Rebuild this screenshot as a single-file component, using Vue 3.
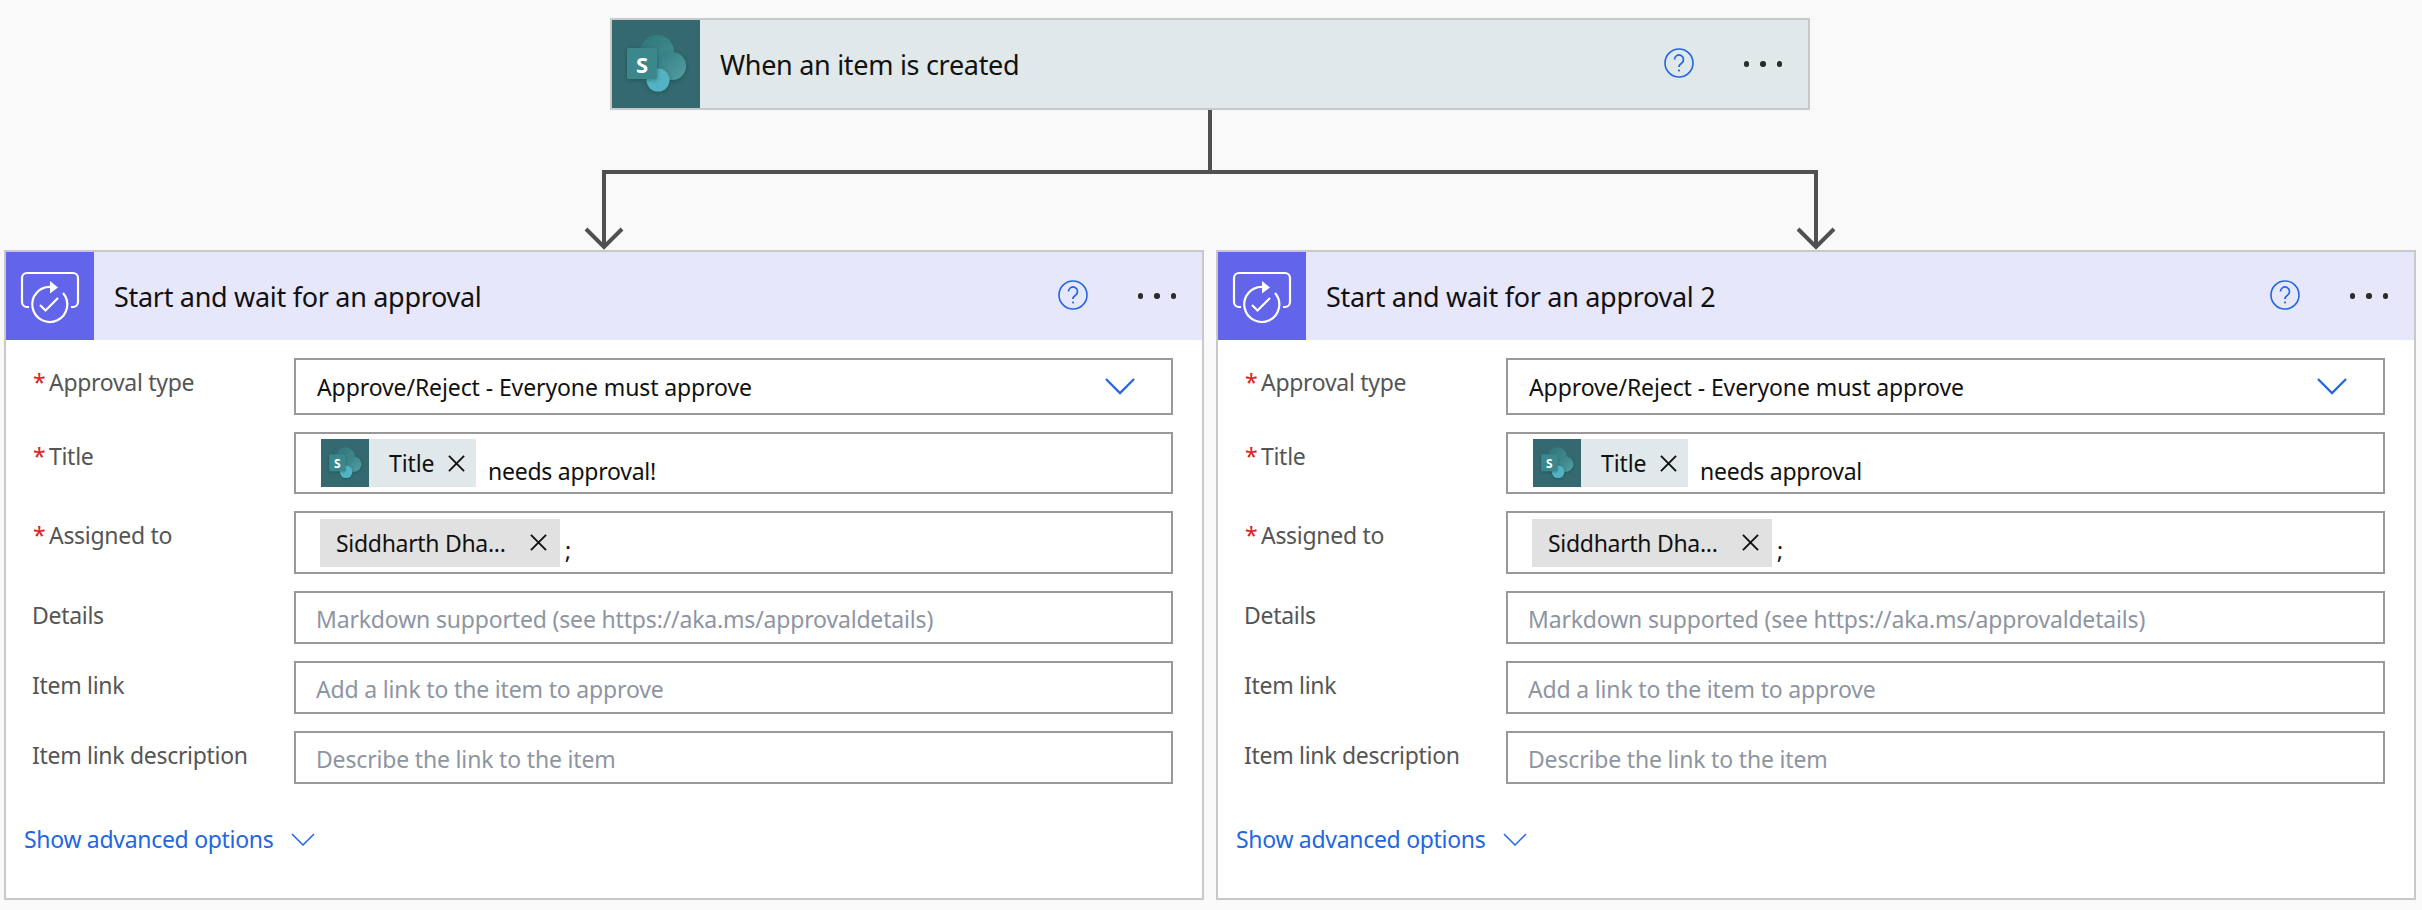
<script setup>
const requiredRows = ['Approval type', 'Title', 'Assigned to']
const placeholderRows = [
  { label: 'Details', text: 'Markdown supported (see https://aka.ms/approvaldetails)' },
  { label: 'Item link', text: 'Add a link to the item to approve' },
  { label: 'Item link description', text: 'Describe the link to the item' },
]
const cards = [
  { title: 'Start and wait for an approval', tail: 'needs approval!' },
  { title: 'Start and wait for an approval 2', tail: 'needs approval' },
]
</script>

<template>
  <div class="page">
    <svg class="defs" width="0" height="0" aria-hidden="true">
      <defs>
        <linearGradient id="spA" x1="0" y1="0" x2="1" y2="1">
          <stop offset="0" stop-color="#2c7478" />
          <stop offset="1" stop-color="#479397" />
        </linearGradient>
        <linearGradient id="spB" x1="0" y1="0" x2="1" y2="1">
          <stop offset="0" stop-color="#327c80" />
          <stop offset="1" stop-color="#54a0a5" />
        </linearGradient>
        <filter id="spShadow" x="-30%" y="-30%" width="160%" height="160%">
          <feDropShadow dx="0" dy="1" stdDeviation="2" flood-color="#0d3a3e" flood-opacity="0.45" />
        </filter>
        <symbol id="sp" viewBox="0 0 88 88">
          <rect width="88" height="88" fill="#33696f" />
          <circle cx="45" cy="32" r="17" fill="url(#spA)" />
          <circle cx="60" cy="46" r="14" fill="url(#spB)" filter="url(#spShadow)" />
          <circle cx="46" cy="60" r="11.500" fill="#52b2c3" filter="url(#spShadow)" />
          <rect x="15" y="28" width="30" height="31" rx="1.500" fill="#3a878b" filter="url(#spShadow)" />
          <text x="30" y="52.500" text-anchor="middle" font-family="Open Sans, sans-serif" font-weight="700" font-size="22" fill="#fff">S</text>
        </symbol>
        <symbol id="approval" viewBox="0 0 88 88">
          <rect width="88" height="88" fill="#6264ea" />
          <g fill="none" stroke="#fff" stroke-width="2.200">
            <path d="M23 55h-2a5 5 0 0 1-5-5V26a5 5 0 0 1 5-5H67a5 5 0 0 1 5 5V50a5 5 0 0 1-5 5h-2" />
            <path d="M45 35A17.500 17.500 0 1 0 57 41" />
            <path d="M34 53l5.500 5.500L52 46" />
          </g>
          <path d="M44 29l8 6.500-8 6z" fill="#fff" />
        </symbol>
      </defs>
    </svg>

    <header class="card-head trigger">
      <svg class="head-icon"><use href="#sp" /></svg>
      <span class="head-title">When an item is created</span>
      <svg class="help" viewBox="0 0 30 30">
        <circle cx="15" cy="15" r="14" fill="none" stroke="#2266e3" stroke-width="1.600" />
        <path d="M10.500 11.500a4.500 4.500 0 1 1 7 3.700c-1.600 1.100-2.500 1.800-2.500 3.800" fill="none" stroke="#2266e3" stroke-width="1.700" />
        <circle cx="15" cy="22.500" r="1.100" fill="#2266e3" />
      </svg>
      <span class="dots"><i /><i /><i /></span>
    </header>

    <svg class="connector" width="2422" height="140" viewBox="0 0 2422 140">
      <g fill="none" stroke="#505050" stroke-width="4">
        <path d="M1210 0V62" />
        <path d="M604 138V62H1816V138" />
        <path d="M586 119l18 18 18-18" />
        <path d="M1798 119l18 18 18-18" />
      </g>
    </svg>

    <div class="cards">
      <section v-for="card in cards" :key="card.title" class="card">
        <header class="card-head action">
          <svg class="head-icon"><use href="#approval" /></svg>
          <span class="head-title">{{ card.title }}</span>
          <svg class="help" viewBox="0 0 30 30">
            <circle cx="15" cy="15" r="14" fill="none" stroke="#2266e3" stroke-width="1.600" />
            <path d="M10.500 11.500a4.500 4.500 0 1 1 7 3.700c-1.600 1.100-2.500 1.800-2.500 3.800" fill="none" stroke="#2266e3" stroke-width="1.700" />
            <circle cx="15" cy="22.500" r="1.100" fill="#2266e3" />
          </svg>
          <span class="dots"><i /><i /><i /></span>
        </header>

        <div class="form">
          <div class="row">
            <label class="label"><b>*</b>{{ requiredRows[0] }}</label>
            <div class="box select">
              <span>Approve/Reject - Everyone must approve</span>
              <svg class="chev" viewBox="0 0 32 18">
                <path d="M1 1l15 15L31 1" fill="none" stroke="#2266e3" stroke-width="2.400" />
              </svg>
            </div>
          </div>

          <div class="row">
            <label class="label"><b>*</b>{{ requiredRows[1] }}</label>
            <div class="box tokens title-box">
              <span class="chip sp-chip">
                <svg class="chip-icon"><use href="#sp" /></svg>
                <span class="chip-text">Title</span>
                <svg class="x" viewBox="0 0 18 18">
                  <path d="M1 1l16 16M17 1L1 17" stroke="#111" stroke-width="2" />
                </svg>
              </span>
              <span class="tail">{{ card.tail }}</span>
            </div>
          </div>

          <div class="row">
            <label class="label"><b>*</b>{{ requiredRows[2] }}</label>
            <div class="box tokens assigned-box">
              <span class="chip person">
                <span class="person-name">Siddharth Dha...</span>
                <svg class="x" viewBox="0 0 18 18">
                  <path d="M1 1l16 16M17 1L1 17" stroke="#111" stroke-width="2" />
                </svg>
              </span>
              <span class="semi">;</span>
            </div>
          </div>

          <div v-for="row in placeholderRows" :key="row.label" class="row">
            <label class="label plain">{{ row.label }}</label>
            <div class="box placeholder"><span>{{ row.text }}</span></div>
          </div>

          <a class="advanced">
            <span>Show advanced options</span>
            <svg class="adv-chev" viewBox="0 0 24 13">
              <path d="M1 1l11 11L23 1" fill="none" stroke="#2266e3" stroke-width="1.500" />
            </svg>
          </a>
        </div>
      </section>
    </div>
  </div>
</template>

<style>
html,
body {
  background: #f9f9f9;
}
</style>

<style scoped>
.page {
  position: relative;
  width: 2422px;
  height: 910px;
  padding-top: 18px;
  box-sizing: border-box;
  overflow: hidden;
  font-family: "Noto Sans", sans-serif;
  color: #111;
  background: #f9f9f9;
}
.defs {
  position: absolute;
}
.card-head {
  display: flex;
  align-items: center;
  height: 88px;
}
.trigger {
  width: 1196px;
  margin-left: 610px;
  background: #e0e8e9;
  border: 2px solid #c8c8c8;
}
.action {
  background: #e7e7fb;
}
.head-icon {
  flex: none;
  width: 88px;
  height: 88px;
}
.head-title {
  flex: 1;
  margin-left: 20px;
  font-size: 27px;
  letter-spacing: -0.3px;
  color: #111;
}
.help {
  flex: none;
  width: 30px;
  height: 30px;
  margin-top: -2px;
}
.dots {
  display: flex;
  gap: 11px;
  margin: 0 26px 0 50px;
}
.dots i {
  display: block;
  width: 5.500px;
  height: 5.500px;
  border-radius: 50%;
  background: #2b2b2b;
}
.connector {
  display: block;
}
.cards {
  display: flex;
  gap: 12px;
  padding-left: 4px;
}
.card {
  flex: none;
  width: 1200px;
  height: 650px;
  box-sizing: border-box;
  background: #fff;
  border: 2px solid #c8c8c8;
}
.form {
  display: flex;
  flex-direction: column;
  gap: 17px;
  padding: 18px 29px 0 26px;
}
.row {
  display: flex;
}
.label {
  flex: none;
  width: 262px;
  line-height: 49px;
  font-size: 23px;
  letter-spacing: -0.3px;
  color: #555;
}
.label b {
  display: inline-block;
  width: 16px;
  margin-left: 1px;
  font-weight: 400;
  color: #e02020;
}
.box {
  flex: 1;
  display: flex;
  align-items: center;
  box-sizing: border-box;
  background: #fff;
  border: 2px solid #999;
  padding-left: 21px;
  font-size: 23px;
  letter-spacing: -0.1px;
  color: #111;
}
.select {
  height: 57px;
  justify-content: space-between;
  padding-right: 36px;
}
.chev {
  width: 30px;
  height: 17px;
}
.tokens {
  padding-left: 25px;
}
.title-box {
  height: 62px;
}
.assigned-box {
  height: 63px;
}
.chip {
  display: flex;
  align-items: center;
  height: 48px;
}
.sp-chip {
  width: 155px;
  background: #e0e8e9;
}
.chip-icon {
  width: 48px;
  height: 48px;
  flex: none;
}
.chip-text {
  margin-left: 20px;
}
.x {
  flex: none;
  width: 17px;
  height: 17px;
  margin-left: 14px;
}
.tail {
  margin: 16px 0 0 12px;
  letter-spacing: -0.25px;
}
.person {
  width: 240px;
  box-sizing: border-box;
  padding-left: 16px;
  background: #e1e1e1;
  margin-left: -1px;
}
.person-name {
  letter-spacing: -0.3px;
}
.person .x {
  margin-left: 24px;
}
.semi {
  margin: 14px 0 0 5px;
}
.placeholder {
  height: 53px;
  padding-left: 20px;
  color: #8e95a2;
  letter-spacing: -0.17px;
}
.placeholder span {
  margin-top: 2px;
}
.advanced {
  display: flex;
  align-items: center;
  margin: 22px 0 0 -8px;
  color: #2266e3;
  font-size: 23px;
  letter-spacing: -0.3px;
}
.adv-chev {
  width: 24px;
  height: 13px;
  margin-left: 18px;
}
</style>
